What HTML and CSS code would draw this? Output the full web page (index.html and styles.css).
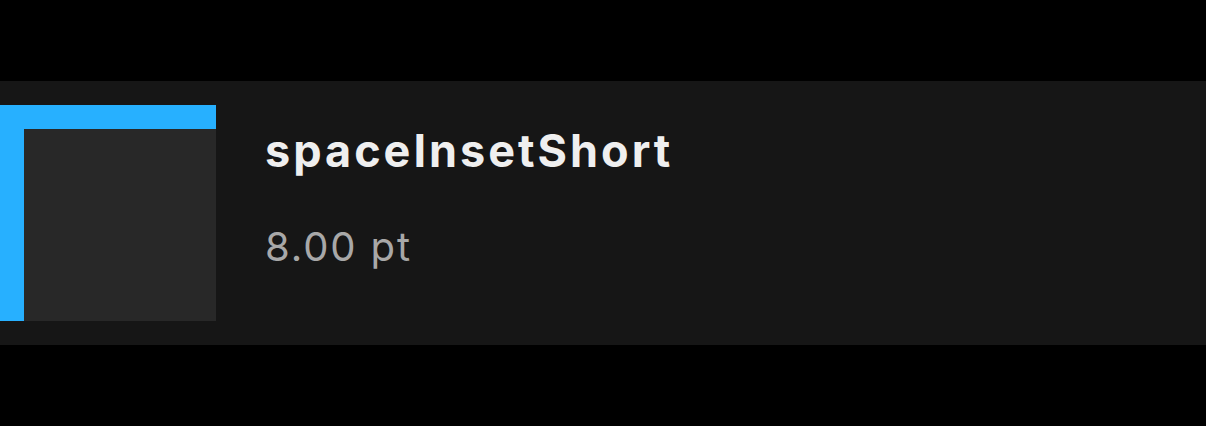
FILE: index.html
```html
<!DOCTYPE html>
<html>
<head>
<meta charset="utf-8">
<link rel="stylesheet" href="styles.css">
</head>
<body>
<div class="page">
  <div class="row">
    <div class="swatch"><div class="inner"></div></div>
    <div class="info">
      <div class="name">spaceInsetShort</div>
      <div class="value">8.00 pt</div>
    </div>
  </div>
</div>
</body>
</html>
```
FILE: styles.css
```css
html, body {
  margin: 0;
  padding: 0;
  background: #000;
}
.page {
  width: 1206px;
  height: 426px;
  padding-top: 81px;
  box-sizing: border-box;
  font-family: Inter, "Noto Sans", sans-serif;
}
.row {
  height: 264px;
  background: #161616;
  display: flex;
  align-items: flex-start;
  padding-top: 24px;
  box-sizing: border-box;
}
.swatch {
  width: 216px;
  height: 216px;
  box-sizing: border-box;
  border-top: 24px solid #27b0ff;
  border-left: 24px solid #27b0ff;
  background: #282828;
}
.info {
  margin-left: 49px;
  display: flex;
  flex-direction: column;
}
.name {
  color: #efefef;
  font-weight: 700;
  font-size: 45px;
  line-height: 1;
  margin-top: 23px;
  letter-spacing: 3px;
}
.value {
  color: #a8a8a8;
  font-size: 40px;
  line-height: 1;
  margin-top: 54px;
  letter-spacing: 1.9px;
}
```
